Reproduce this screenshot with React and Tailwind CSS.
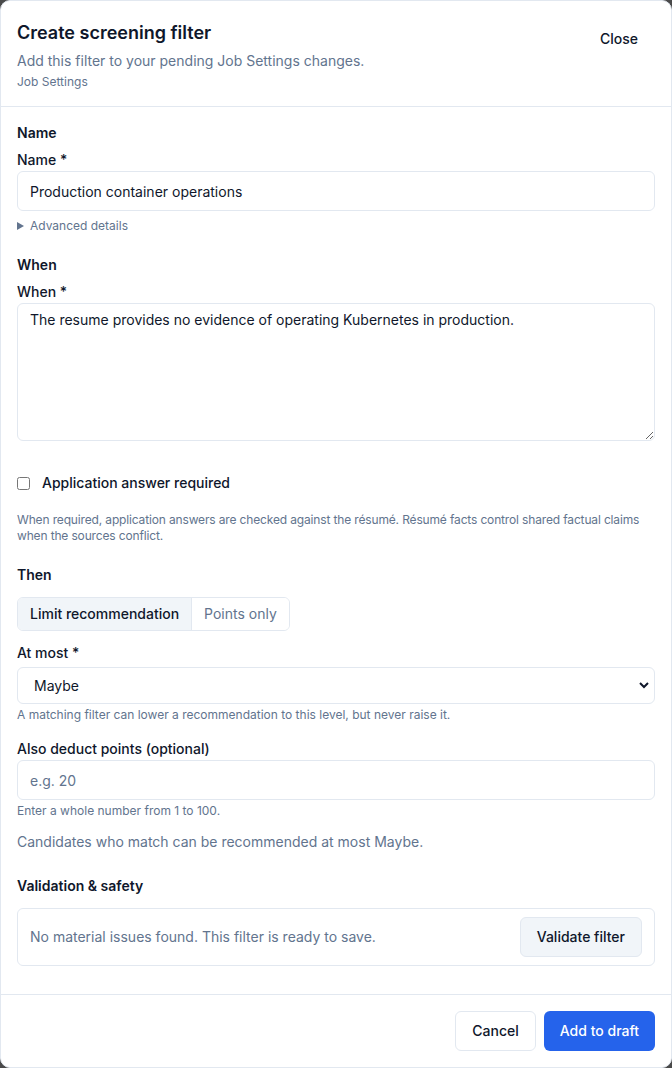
import { useState } from 'react'
import clsx from 'clsx'

function FieldLabel({ children, className }) {
  return <label className={clsx('block text-sm leading-5 font-medium text-slate-900', className)}>{children}</label>
}

function SectionTitle({ children }) {
  return <h3 className="text-sm leading-5 font-semibold text-slate-900 mb-[7px]">{children}</h3>
}

export default function App() {
  const [mode, setMode] = useState('limit')
  const [name, setName] = useState('Production container operations')
  const [when, setWhen] = useState('The resume provides no evidence of operating Kubernetes in production.')

  return (
    <div className="h-[1068px] bg-[#4a4a4a] font-['Inter',sans-serif] text-slate-900">
      <div className="h-full bg-white rounded-[10px] border border-slate-200 flex flex-col overflow-hidden">
        <header className="px-4 pt-[19px] pb-[16px] border-b border-slate-200 flex items-start justify-between">
          <div>
            <h2 className="text-lg font-semibold leading-[26px] text-slate-900">Create screening filter</h2>
            <p className="mt-[5px] text-sm text-slate-500 leading-5">Add this filter to your pending Job Settings changes.</p>
            <p className="mt-[3px] text-xs text-slate-500 leading-4">Job Settings</p>
          </div>
          <button className="mt-[5px] mr-[9px] px-2 py-1 text-sm font-medium text-slate-900 rounded-md hover:bg-slate-100">
            Close
          </button>
        </header>

        <main className="flex-1 px-4 pt-4">
          <section>
            <SectionTitle>Name</SectionTitle>
            <FieldLabel className="mb-px">Name *</FieldLabel>
            <input
              value={name}
              onChange={(e) => setName(e.target.value)}
              className="w-full h-10 px-3 rounded-md border border-slate-200 text-sm text-slate-900 outline-none"
            />
            <div className="mt-[7px] flex items-center gap-[6px] text-xs leading-4 text-slate-500">
              <svg width="7" height="8" viewBox="0 0 7 8" className="fill-slate-500">
                <path d="M0 0L7 4L0 8Z" />
              </svg>
              Advanced details
            </div>
          </section>

          <section className="mt-[21px]">
            <SectionTitle>When</SectionTitle>
            <FieldLabel className="mb-px">When *</FieldLabel>
            <textarea
              value={when}
              onChange={(e) => setWhen(e.target.value)}
              className="block w-full h-[138px] px-3 pt-[6px] pb-2 rounded-md border border-slate-200 text-sm leading-5 text-slate-900 outline-none"
            />
          </section>

          <label className="mt-[32px] flex items-center gap-3 text-sm leading-5 font-medium text-slate-900">
            <input type="checkbox" className="w-[13px] h-[13px]" />
            Application answer required
          </label>
          <p className="mt-[19px] text-xs leading-4 tracking-[-0.15px] text-slate-500">
            When required, application answers are checked against the résumé. Résumé facts control shared factual claims when the sources conflict.
          </p>

          <section className="mt-[21px]">
            <h3 className="text-sm leading-5 font-semibold text-slate-900 mb-3">Then</h3>
            <div className="inline-flex h-[34px] rounded-md border border-slate-200 overflow-hidden text-sm">
              <button
                onClick={() => setMode('limit')}
                className={clsx(
                  'px-3 font-medium',
                  mode === 'limit' ? 'bg-slate-100 text-slate-900' : 'bg-white text-slate-500'
                )}
              >
                Limit recommendation
              </button>
              <button
                onClick={() => setMode('points')}
                className={clsx(
                  'px-3 border-l border-slate-200',
                  mode === 'points' ? 'bg-slate-100 text-slate-900 font-medium' : 'bg-white text-slate-500'
                )}
              >
                Points only
              </button>
            </div>

            <div className="mt-3">
              <FieldLabel className="mb-1">At most *</FieldLabel>
              <div className="relative">
                <select className="block w-full h-[37px] pl-4 pr-8 rounded-md border border-slate-200 bg-white text-sm text-slate-900 appearance-none outline-none">
                  <option>Maybe</option>
                  <option>No</option>
                  <option>Yes</option>
                </select>
                <svg
                  width="10"
                  height="7"
                  viewBox="0 0 10 7"
                  className="absolute right-[6px] top-[15px] pointer-events-none"
                  fill="none"
                  stroke="#0f172a"
                  strokeWidth="2"
                >
                  <path d="M1 1l4 4 4-4" />
                </svg>
              </div>
              <p className="mt-[3px] text-xs leading-4 text-slate-500">
                A matching filter can lower a recommendation to this level, but never raise it.
              </p>
            </div>

            <div className="mt-4">
              <FieldLabel className="mb-px">Also deduct points (optional)</FieldLabel>
              <input
                placeholder="e.g. 20"
                className="block w-full h-10 px-3 rounded-md border border-slate-200 text-sm text-slate-900 placeholder:text-slate-500 outline-none"
              />
              <p className="mt-[3px] text-xs leading-4 text-slate-500">Enter a whole number from 1 to 100.</p>
            </div>

            <p className="mt-[13px] text-sm leading-5 text-slate-500">
              Candidates who match can be recommended at most Maybe.
            </p>
          </section>

          <section className="mt-6">
            <h3 className="text-sm leading-5 font-semibold text-slate-900 mb-3">Validation &amp; safety</h3>
            <div className="h-[58px] px-3 rounded-md border border-slate-200 flex items-center justify-between">
              <p className="text-sm text-slate-500">No material issues found. This filter is ready to save.</p>
              <button className="h-10 px-4 rounded-md border border-slate-200 bg-slate-100 text-sm font-medium text-slate-900">
                Validate filter
              </button>
            </div>
          </section>
        </main>

        <footer className="h-[73px] border-t border-slate-200 px-4 flex items-start justify-end gap-2 pt-4">
          <button className="h-10 px-4 rounded-md border border-slate-200 bg-white text-sm font-medium text-slate-900">
            Cancel
          </button>
          <button className="h-10 px-4 rounded-md bg-[#2563eb] text-sm font-medium text-white">
            Add to draft
          </button>
        </footer>
      </div>
    </div>
  )
}
